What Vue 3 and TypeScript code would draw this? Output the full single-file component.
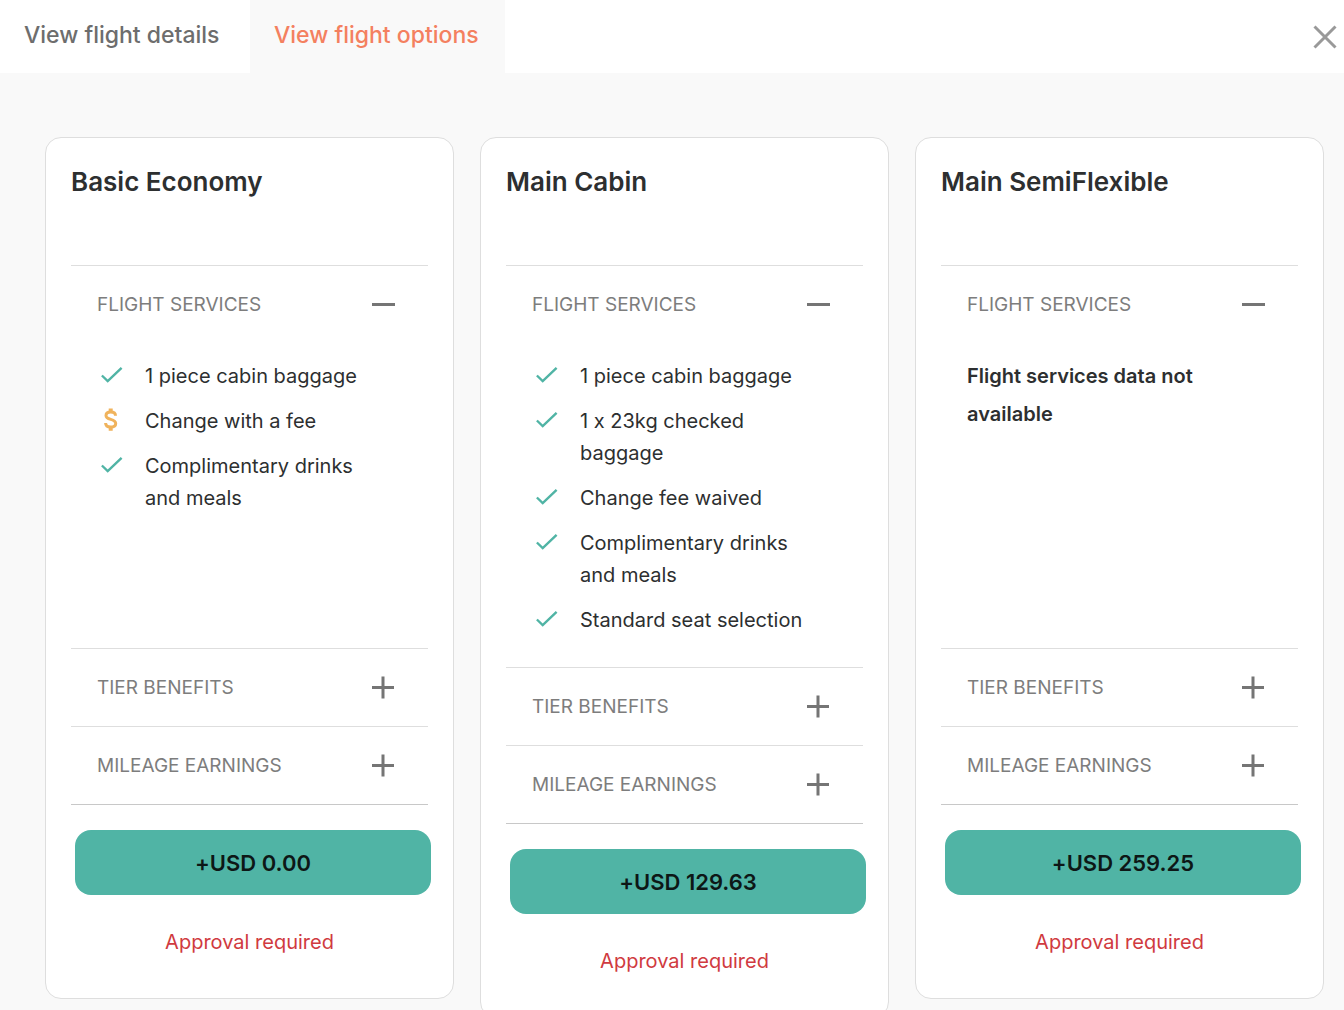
<script setup lang="ts">
import { reactive, ref } from 'vue'

type Mark = 'included' | 'fee'
interface Service { mark: Mark; text: string }
interface Fare { name: string; price: string; services: Service[] }

const tabs = ['View flight details', 'View flight options']
const activeTab = ref(1)

const fares: Fare[] = [
  {
    name: 'Basic Economy',
    price: '+USD 0.00',
    services: [
      { mark: 'included', text: '1 piece cabin baggage' },
      { mark: 'fee', text: 'Change with a fee' },
      { mark: 'included', text: 'Complimentary drinks and meals' },
    ],
  },
  {
    name: 'Main Cabin',
    price: '+USD 129.63',
    services: [
      { mark: 'included', text: '1 piece cabin baggage' },
      { mark: 'included', text: '1 x 23kg checked baggage' },
      { mark: 'included', text: 'Change fee waived' },
      { mark: 'included', text: 'Complimentary drinks and meals' },
      { mark: 'included', text: 'Standard seat selection' },
    ],
  },
  { name: 'Main SemiFlexible', price: '+USD 259.25', services: [] },
]

const sections = ['FLIGHT SERVICES', 'TIER BENEFITS', 'MILEAGE EARNINGS']
const open = reactive(fares.map(() => [true, false, false]))
</script>

<template>
  <div class="page">
    <header class="topbar">
      <nav class="tabs" role="tablist">
        <button
          v-for="(tab, i) in tabs"
          :key="tab"
          class="tab"
          :class="{ active: i === activeTab }"
          type="button"
          role="tab"
          :aria-selected="i === activeTab"
          @click="activeTab = i"
        >{{ tab }}</button>
      </nav>
      <button class="close" type="button" aria-label="Close">
        <svg width="24" height="24" viewBox="0 0 24 24"><path d="M1.5 1.5l21 21M22.5 1.5l-21 21" /></svg>
      </button>
    </header>

    <main class="fares">
      <article v-for="(fare, f) in fares" :key="fare.name" class="card">
        <h2 class="name">{{ fare.name }}</h2>
        <div class="sections">
          <section v-for="(label, s) in sections" :key="label" class="section">
            <button class="toggle" type="button" :aria-expanded="open[f][s]" @click="open[f][s] = !open[f][s]">
              <span>{{ label }}</span>
              <svg width="24" height="24" viewBox="0 0 24 24">
                <path :d="open[f][s] ? 'M1 11.500h23' : 'M1 11.500h22M12 .5v22'" />
              </svg>
            </button>
            <div v-if="s === 0 && open[f][s]" class="body">
              <ul v-if="fare.services.length" class="services">
                <li v-for="item in fare.services" :key="item.text" class="service">
                  <svg v-if="item.mark === 'included'" class="mark included" width="28" height="32" viewBox="0 0 28 32">
                    <path d="M4.900 15.500l5.800 5.500L24.600 7.800" />
                  </svg>
                  <svg v-else class="mark fee" width="28" height="32" viewBox="0 0 28 32">
                    <path d="M13.700 3.400v4M13.700 21.700v4" class="stem" />
                    <path d="M18.500 10.800C18.500 8.300 16.500 7 13.700 7s-4.700 1.400-4.700 3.600c0 2.400 1.900 3.100 4.700 3.800 2.800.8 5 1.700 5 4.100 0 2.300-2 3.600-5 3.600-3 0-5.100-1.500-5.100-4" />
                  </svg>
                  <span>{{ item.text }}</span>
                </li>
              </ul>
              <p v-else class="empty">Flight services data not available</p>
            </div>
          </section>
        </div>
        <button class="price" type="button">{{ fare.price }}</button>
        <p class="approval">Approval required</p>
      </article>
    </main>
  </div>
</template>

<style>
html {
  background: #f9f9f9;
}
</style>

<style scoped>
.page {
  min-height: 100vh;
  box-sizing: border-box;
  background: #f9f9f9;
  color: #2d2f30;
  font-family: Inter, "Liberation Sans", sans-serif;
  font-size: 20px;
  font-variant-ligatures: no-contextual;
  line-height: 32px;
}
button {
  border: 0;
  background: none;
  font: inherit;
  font-variant-ligatures: inherit;
  color: inherit;
  cursor: pointer;
}
h2, p, ul {
  margin: 0;
  padding: 0;
}
svg {
  flex: none;
  fill: none;
}
.topbar {
  display: flex;
  justify-content: space-between;
  align-items: stretch;
  height: 73px;
  background: #fff;
}
.tabs {
  display: flex;
}
.tab {
  min-width: 250px;
  padding: 0 26px 4px 24px;
  color: #6d6d6d;
  font-size: 23px;
  font-weight: 500;
  text-align: left;
}
.tab.active {
  background: #f9f9f9;
  color: #f4805f;
}
.close {
  display: flex;
  align-items: center;
  padding: 0 7px;
}
.close path {
  stroke: #999;
  stroke-width: 3;
}
.fares {
  display: grid;
  grid-template-columns: repeat(3, minmax(0, 1fr));
  align-items: start;
  gap: 26px;
  padding: 64px 20px 0 45px;
}
.card {
  display: flex;
  flex-direction: column;
  padding: 28px 0 40px;
  border: 1px solid #dedede;
  border-radius: 16px;
  background: #fff;
}
.name {
  min-height: 99px;
  padding: 0 25px;
  font-size: 26px;
  font-weight: 600;
}
.sections {
  margin: 0 25px;
  border-bottom: 1px solid #c8c8c8;
}
.section {
  border-top: 1px solid #dedede;
}
.toggle {
  display: flex;
  justify-content: space-between;
  align-items: center;
  width: 100%;
  padding: 23px 33px 22px 26px;
  color: #7d7d7d;
  font-size: 19px;
  text-align: left;
}
.toggle path {
  stroke: #757575;
  stroke-width: 3;
}
.body {
  box-sizing: border-box;
  min-height: 305px;
  padding: 17px 50px 31px 26px;
}
.services {
  display: flex;
  flex-direction: column;
  gap: 13px;
  list-style: none;
}
.service {
  display: flex;
  gap: 20px;
}
.included path {
  stroke: #50b4a5;
  stroke-width: 2.4;
}
.fee path {
  stroke: #f0b35c;
  stroke-width: 3;
}
.fee .stem {
  stroke-width: 4;
}
.empty {
  font-weight: 600;
  line-height: 38px;
  margin-top: -3px;
}
.price {
  margin: 25px 22px 31px 29px;
  height: 65px;
  border-radius: 16px;
  background: #50b4a5;
  color: #0d1716;
  font-size: 22px;
  font-weight: 600;
}
.approval {
  color: #d03a40;
  text-align: center;
}
</style>
